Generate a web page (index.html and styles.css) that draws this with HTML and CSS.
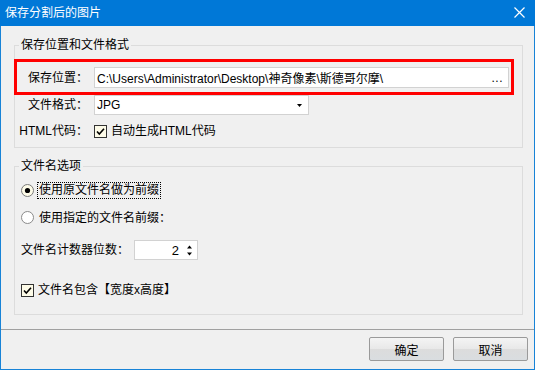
FILE: index.html
```html
<!DOCTYPE html>
<html lang="zh">
<head>
<meta charset="utf-8">
<title>保存分割后的图片</title>
<link rel="stylesheet" href="styles.css">
</head>
<body>
<div class="window">
  <div class="titlebar">
    <span class="title">保存分割后的图片</span>
    <svg class="close" width="11" height="11" viewBox="0 0 11 11"><path d="M0.5 0.5L10.5 10.5M10.5 0.5L0.5 10.5" stroke="#fff" stroke-width="1.2" fill="none"/></svg>
  </div>
  <div class="content">
    <fieldset class="group g1">
      <legend>保存位置和文件格式</legend>
      <div class="row r1">
        <span class="lbl">保存位置：</span>
        <div class="field path"><span class="ptext">C:\Users\Administrator\Desktop\神奇像素\斯德哥尔摩\</span><span class="dots">...</span></div>
        <div class="redmark"></div>
      </div>
      <div class="row r2">
        <span class="lbl">文件格式：</span>
        <div class="field select"><span>JPG</span><svg class="arrow" width="5" height="3" viewBox="0 0 5 3"><path d="M0 0H5L2.5 3Z" fill="#000"/></svg></div>
      </div>
      <div class="row r3">
        <span class="lbl">HTML代码：</span>
        <span class="check"><svg width="13" height="13" viewBox="0 0 13 13"><rect x="0.5" y="0.5" width="12" height="12" fill="#fdfbe8" stroke="#333"/><path d="M3 6.5L5.3 9L10 3.8" stroke="#000" stroke-width="1.6" fill="none"/></svg></span>
        <span class="ctext">自动生成HTML代码</span>
      </div>
    </fieldset>
    <fieldset class="group g2">
      <legend>文件名选项</legend>
      <div class="row o1">
        <svg class="radio" width="13" height="13" viewBox="0 0 13 13"><circle cx="6.5" cy="6.5" r="6" fill="#fdfbe8" stroke="#7a7a7a"/><circle cx="6.5" cy="6.5" r="2.6" fill="#000"/></svg>
        <span class="focus">使用原文件名做为前缀</span>
      </div>
      <div class="row o2">
        <svg class="radio" width="13" height="13" viewBox="0 0 13 13"><circle cx="6.5" cy="6.5" r="6" fill="#fff" stroke="#8a8a8a"/></svg>
        <span class="otext">使用指定的文件名前缀：</span>
      </div>
      <div class="row o3">
        <span class="slbl">文件名计数器位数：</span>
        <div class="field spin"><span class="num">2</span><svg class="spinarrows" width="5" height="11" viewBox="0 0 5 11"><path d="M0 3.5H5L2.5 0.5Z" fill="#000"/><path d="M0 7.5H5L2.5 10.5Z" fill="#000"/></svg></div>
      </div>
      <div class="row o4">
        <span class="check"><svg width="13" height="13" viewBox="0 0 13 13"><rect x="0.5" y="0.5" width="12" height="12" fill="#fdfbe8" stroke="#333"/><path d="M3 6.5L5.3 9L10 3.8" stroke="#000" stroke-width="1.6" fill="none"/></svg></span>
        <span class="ctext">文件名包含【宽度x高度】</span>
      </div>
    </fieldset>
  </div>
  <div class="footer">
    <button class="btn">确定</button>
    <button class="btn">取消</button>
  </div>
</div>
</body>
</html>
```
FILE: styles.css
```css
* { box-sizing: border-box; }
html, body { margin: 0; padding: 0; background: #f0f0f0; }
body {
  font-family: "Liberation Sans", "Noto Sans CJK SC", sans-serif;
  font-size: 12px;
  color: #000;
}
.window {
  width: 535px;
  height: 370px;
  border: 1px solid #1883d7;
  border-top: 0;
  background: #f0f0f0;
  display: flex;
  flex-direction: column;
}
.titlebar {
  height: 26px;
  margin: 0 -1px;
  background: #0078d7;
  color: #fff;
  display: flex;
  align-items: center;
  padding: 0 10px 0 5px;
  flex: none;
}
.title { flex: 1; line-height: 16px; }
.close { margin-right: 0; margin-top: -1px; }
.content {
  flex: 1;
  padding: 0 11px 0 13px;
}
.group {
  margin: 0;
  padding: 0;
  border: 1px solid #dcdcdc;
  min-width: 0;
}
.group legend {
  margin-left: 4px;
  padding: 0 2px;
  line-height: 16px;
  height: 16px;
}
.g1 { margin-top: 11px; padding-bottom: 9px; }
.g2 { margin-top: 10px; padding-bottom: 17px; }
.row { display: flex; align-items: center; }
.lbl {
  width: 73px;
  text-align: right;
  white-space: nowrap;
  margin-right: 6px;
  line-height: 16px;
}
.r1 { position: relative; margin-top: 14px; height: 21px; }
.r2 { margin-top: 7px; height: 20px; }
.r3 { margin-top: 9px; height: 14px; }
.field {
  background: #fff;
  border: 1px solid #d2d2d2;
  display: flex;
  align-items: center;
  height: 100%;
}
.path { width: 415px; padding: 0 5px 0 2px; }
.ptext { flex: 1; white-space: nowrap; }
.dots { letter-spacing: 0.5px; }
.redmark {
  position: absolute;
  left: -1px;
  top: -8px;
  width: 500px;
  height: 36px;
  border: 3px solid #ff0000;
  pointer-events: none;
}
.select { width: 215px; padding: 0 6px 0 2px; }
.select span { flex: 1; }
.arrow { margin-right: 0; margin-top: 1px; }
.check { width: 13px; height: 13px; display: block; margin-right: 4px; flex: none; }
.check svg { display: block; }
.ctext { line-height: 16px; white-space: nowrap; }
.g2 .row { padding-left: 6px; }
.o1 { margin-top: 8px; height: 17px; }
.o2 { margin-top: 10px; height: 17px; }
.o3 { margin-top: 14px; height: 20px; }
.o4 { margin-top: 23px; height: 14px; }
.radio { display: block; flex: none; margin-right: 3px; }
.focus {
  border: 1px dotted #000;
  padding: 0 1px;
  line-height: 15px;
  white-space: nowrap;
}
.otext { padding-left: 2px; white-space: nowrap; line-height: 16px; }
.slbl { width: 113px; white-space: nowrap; line-height: 16px; }
.spin { width: 64px; padding: 0 5px 0 4px; justify-content: flex-end; }
.num { font-size: 13px; margin-right: 8px; }
.spinarrows { display: block; }
.footer {
  flex: none;
  height: 40px;
  border-top: 1px solid #a0a0a0;
  display: flex;
  justify-content: flex-end;
  align-items: flex-start;
  padding: 7px 6px 0 0;
  gap: 9px;
}
.btn {
  width: 75px;
  height: 24px;
  font-family: "Liberation Sans", "Noto Sans CJK SC", sans-serif;
  font-size: 12px;
  color: #000;
  border: 1px solid #9a9a9a;
  border-radius: 2px;
  background: linear-gradient(#f4f4f4, #e8e8e8 50%, #dcdcdc 51%, #d9dde0);
  padding: 0;
}
```
